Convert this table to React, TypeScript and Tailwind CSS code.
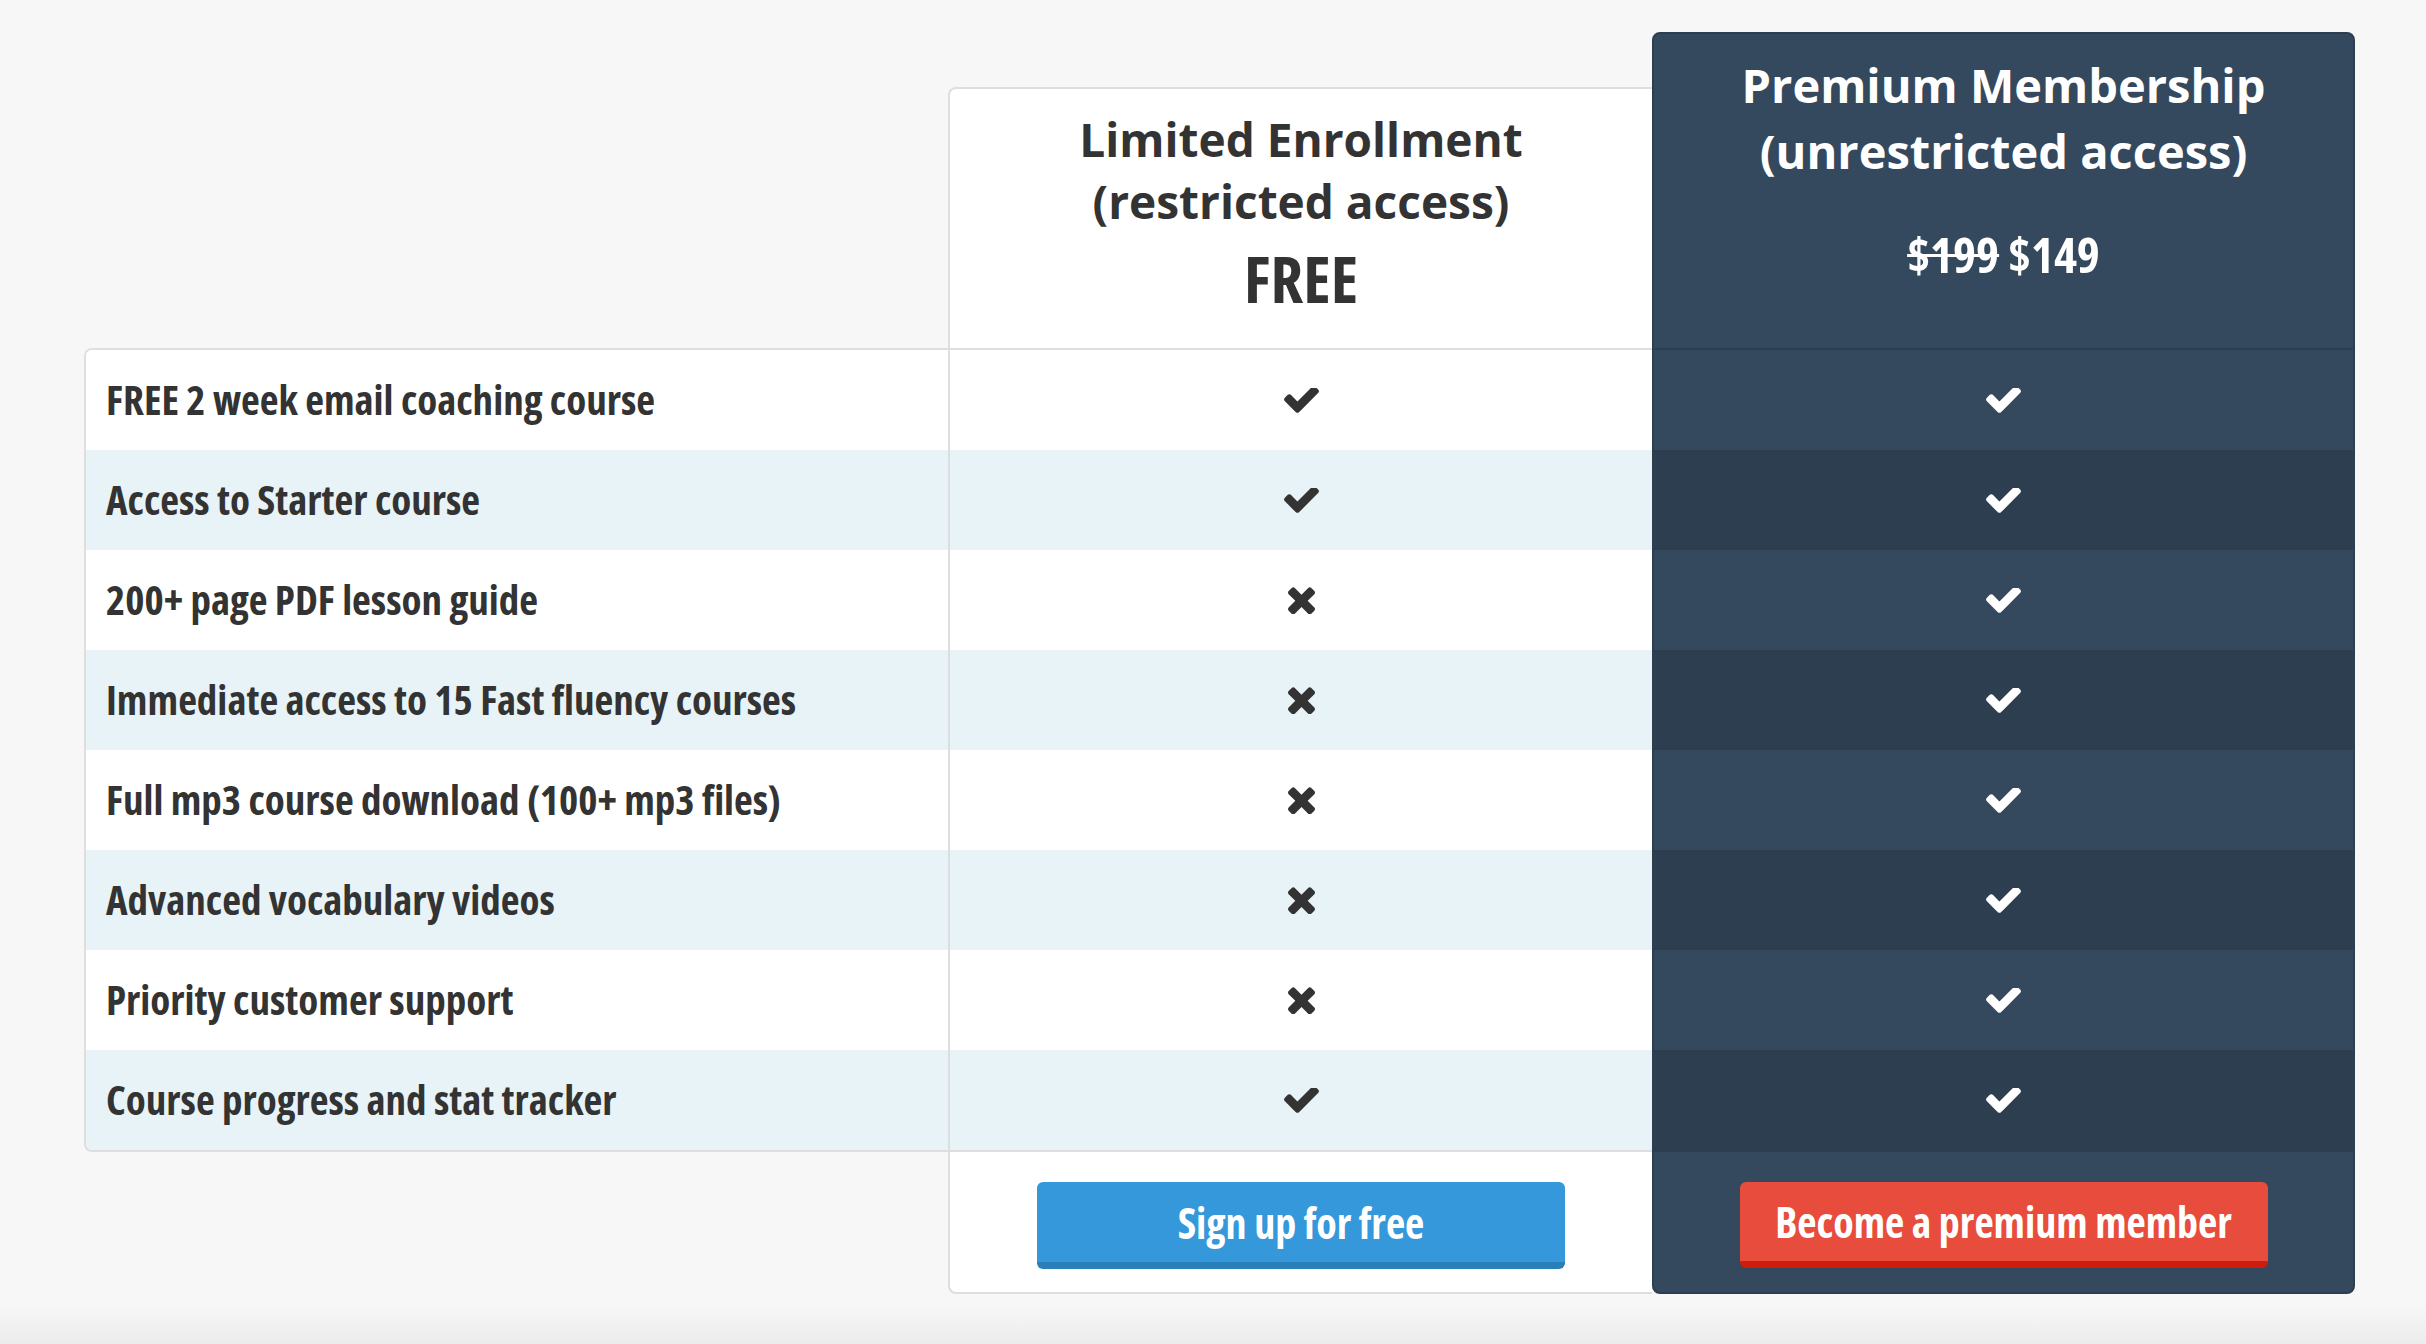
import type { ReactNode } from "react";

const features = [
  { label: "FREE 2 week email coaching course", free: true },
  { label: "Access to Starter course", free: true },
  { label: "200+ page PDF lesson guide", free: false },
  { label: "Immediate access to 15 Fast fluency courses", free: false },
  { label: "Full mp3 course download (100+ mp3 files)", free: false },
  { label: "Advanced vocabulary videos", free: false },
  { label: "Priority customer support", free: false },
  { label: "Course progress and stat tracker", free: true },
];

function CheckIcon({ className }: { className?: string }) {
  return (
    <svg viewBox="121 420 1550 1110" className={className} fill="currentColor">
      <path d="M1671 566q0 40-28 68l-724 724-136 136q-28 28-68 28t-68-28l-136-136-362-362q-28-28-28-68t28-68l136-136q28-28 68-28t68 28l294 295 656-657q28-28 68-28t68 28l136 136q28 28 28 68z" />
    </svg>
  );
}

function CrossIcon({ className }: { className?: string }) {
  return (
    <svg viewBox="110 350 1188 1188" className={className} fill="currentColor">
      <path d="M1298 1322q0 40-28 68l-136 136q-28 28-68 28t-68-28l-294-294-294 294q-28 28-68 28t-68-28l-136-136q-28-28-28-68t28-68l294-294-294-294q-28-28-28-68t28-68l136-136q28-28 68-28t68 28l294 294 294-294q28-28 68-28t68 28l136 136q28 28 28 68t-28 68l-294 294 294 294q28 28 28 68z" />
    </svg>
  );
}

function Cell({ i, dark, children }: { i: number; dark?: boolean; children: ReactNode }) {
  const bg = dark
    ? i % 2 === 0
      ? "bg-[#34495e]"
      : "bg-[#2c3e50]"
    : i % 2 === 0
      ? "bg-white"
      : "bg-[#e8f3f7]";
  return <div className={`flex h-[100px] items-center justify-center ${bg}`}>{children}</div>;
}

export default function App() {
  return (
    <div className="flex min-h-screen flex-col bg-[#f7f7f7] font-['Open_Sans',sans-serif] text-[#333]">
      <div className="flex pl-[84px] pt-[32px]">
        {/* Feature labels */}
        <div className="w-[864px] pt-[316px]">
          <div className="overflow-hidden rounded-l-lg border-2 border-r-0 border-[#dedede] bg-white">
            {features.map((f, i) => (
              <div
                key={f.label}
                className={`flex h-[100px] items-center px-5 text-[41px] font-bold font-stretch-condensed ${
                  i % 2 === 0 ? "bg-white" : "bg-[#e8f3f7]"
                }`}
              >
                {f.label}
              </div>
            ))}
          </div>
        </div>

        {/* Free column */}
        <div className="mt-[55px] flex h-[1207px] w-[704px] flex-col overflow-hidden rounded-l-lg border-2 border-r-0 border-[#dedede] bg-white">
          <div className="flex h-[261px] flex-col items-center border-b-2 border-[#dedede] pt-[19px] text-center">
            <div className="text-[46px] leading-[62px] font-bold">Limited Enrollment</div>
            <div className="text-[46px] leading-[62px] font-bold">(restricted access)</div>
            <div className="mt-[15px] text-[64px] leading-[64px] font-bold font-stretch-condensed">FREE</div>
          </div>
          {features.map((f, i) => (
            <Cell key={f.label} i={i}>
              {f.free ? (
                <CheckIcon className="h-[25px] w-[35px] text-[#333]" />
              ) : (
                <CrossIcon className="h-[27px] w-[27px] text-[#333]" />
              )}
            </Cell>
          ))}
          <div className="flex flex-1 justify-center border-t-2 border-[#dedede] pt-[30px]">
            <button className="h-[87px] w-[528px] rounded-md border-b-[7px] border-[#2980b9] bg-[#3498db] text-[42px] font-bold text-white font-stretch-condensed">
              Sign up for free
            </button>
          </div>
        </div>

        {/* Premium column */}
        <div className="flex h-[1262px] w-[703px] flex-col overflow-hidden rounded-lg border-2 border-[#2c3e50] bg-[#34495e] text-white">
          <div className="flex h-[316px] flex-col items-center border-b-2 border-[#2c3e50] pt-[18px] text-center">
            <div className="text-[47px] leading-[66px] font-bold">Premium Membership</div>
            <div className="text-[47px] leading-[66px] font-bold">(unrestricted access)</div>
            <div className="mt-[46px] text-[49px] leading-[49px] font-bold font-stretch-condensed">
              <span className="line-through decoration-[3px]">$199</span> $149
            </div>
          </div>
          {features.map((f, i) => (
            <Cell key={f.label} i={i} dark>
              <CheckIcon className="h-[25px] w-[35px] text-white" />
            </Cell>
          ))}
          <div className="flex flex-1 justify-center border-t-2 border-[#2c3e50] pt-[30px]">
            <button className="h-[86px] w-[528px] rounded-md border-b-[7px] border-[#d01c0c] bg-[#e74c3c] text-[42px] font-bold text-white font-stretch-condensed">
              Become a premium member
            </button>
          </div>
        </div>
      </div>
      <div className="mt-auto h-[40px] bg-gradient-to-b from-[#f7f7f7] to-[#ececec]" />
    </div>
  );
}
